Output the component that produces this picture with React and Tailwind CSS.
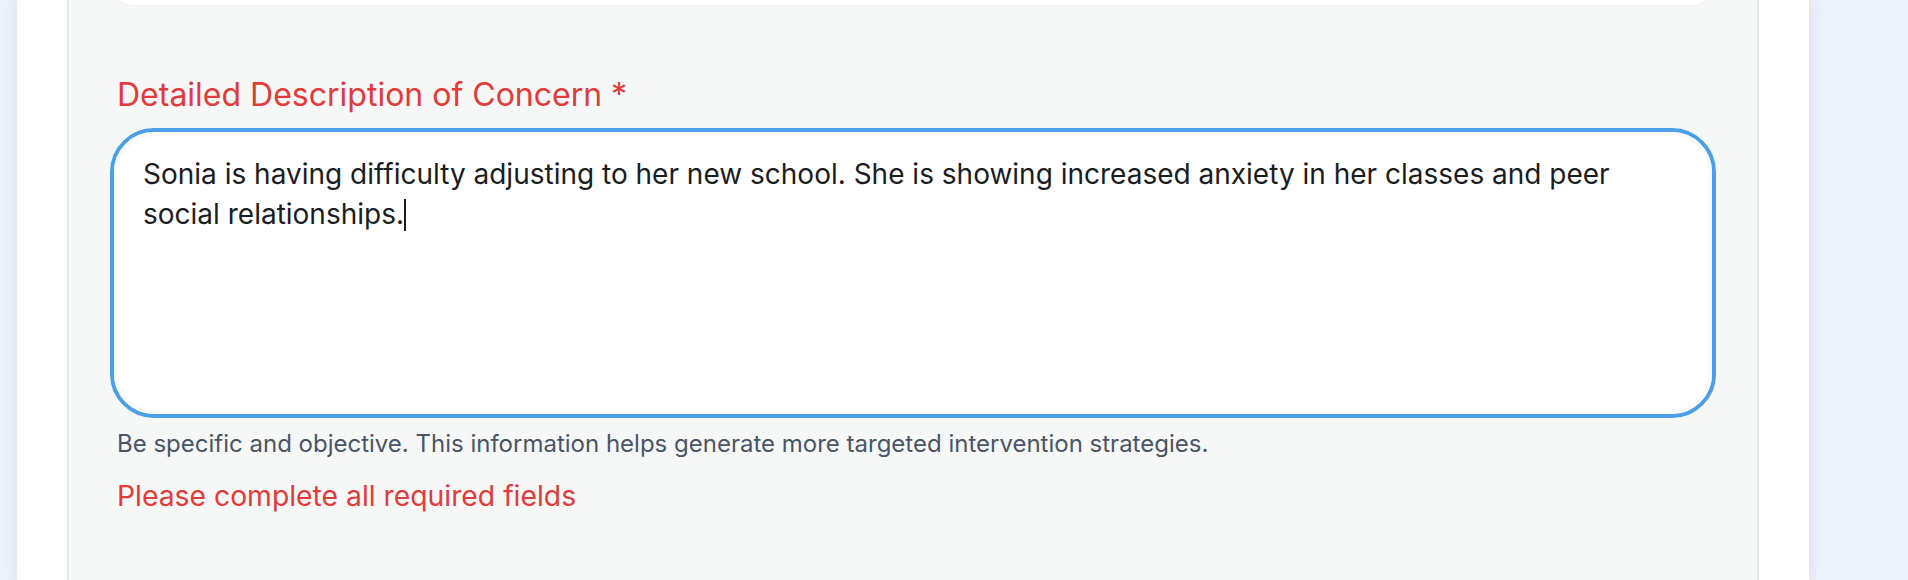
export default function App() {
  const font = { fontFamily: 'Inter, "Noto Sans", sans-serif' };
  return (
    <div className="h-[580px] w-[1908px] overflow-hidden bg-[#edf1fa] flex" style={font}>
      <div className="ml-[17px] w-[1792px] h-full bg-white px-[50px] shadow-[0_0_12px_rgba(150,165,200,0.25)]">
        <div className="h-full border-x-2 border-[#e2e8ee] bg-[#f6f8f7] px-[41px] flex flex-col">
          <div className="-mt-[44px] h-[49px] shrink-0 rounded-[44px] bg-white shadow-[0_1px_2px_rgba(0,0,0,0.03)]" />
          <label className="mt-[70px] ml-[7px] text-[32px] leading-[39px] font-normal text-[#e33a3a]">
            Detailed Description of Concern *
          </label>
          <div className="mt-[14px] h-[290px] shrink-0 rounded-[44px] border-[4px] border-[#4a9fe6] bg-white">
            <div className="h-full w-full rounded-[40px] border-[4px] border-[#f8f9f9] bg-white pl-[25px] pr-[25px] pt-[18px] text-[28px] leading-[40px] text-[#1a1d23]">
              Sonia is having difficulty adjusting to her new school. She is showing increased anxiety in her classes and peer social relationships.
              <span className="inline-block w-[2px] h-[32px] bg-[#1a1d23] align-[-7px]" />
            </div>
          </div>
          <p className="mt-[10px] ml-[7px] text-[24px] leading-[32px] text-[#4a5568]">
            Be specific and objective. This information helps generate more targeted intervention strategies.
          </p>
          <p className="mt-[18px] ml-[7px] text-[28.3px] leading-[36px] text-[#e33a3a]">
            Please complete all required fields
          </p>
        </div>
      </div>
    </div>
  );
}
